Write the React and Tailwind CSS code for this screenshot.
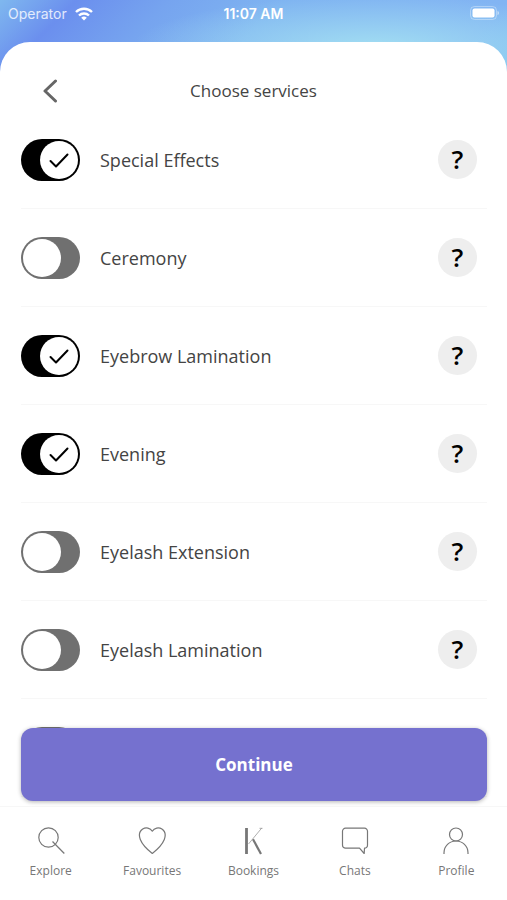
import React, { useState } from 'react';

const initialServices = [
  { name: 'Special Effects', enabled: true },
  { name: 'Ceremony', enabled: false },
  { name: 'Eyebrow Lamination', enabled: true },
  { name: 'Evening', enabled: true },
  { name: 'Eyelash Extension', enabled: false },
  { name: 'Eyelash Lamination', enabled: false },
  { name: 'Eyelash Tinting', enabled: false },
];

const SearchIcon = () => (
  <svg className="size-7" viewBox="0 0 28 28" fill="none" stroke="currentColor" strokeWidth="1.2">
    <circle cx="11.5" cy="10.5" r="9.7" />
    <path d="M15.500 14.500 27.300 26.500" />
  </svg>
);

const HeartIcon = () => (
  <svg className="size-7" viewBox="0 0 28 28" fill="none" stroke="currentColor" strokeWidth="1.2" strokeLinejoin="round">
    <path d="M14.300 4.200C12.300.8 7.800 0 4.700 2 1.500 4.200.8 8.500 2.300 12.500c1.800 4.500 6.500 9.700 12 14 5.500-4.300 10.200-9.500 12-14 1.500-4 .8-8.300-2.400-10.500C20.800 0 16.300.8 14.300 4.200Z" />
  </svg>
);

const BrandIcon = () => (
  <svg className="size-7" viewBox="0 0 28 28" fill="none" stroke="currentColor">
    <path d="M7.500 1v26" strokeWidth="2.800" />
    <path d="M9.500 17 22.500 1.300" strokeWidth="0.600" />
    <path d="M20.500 1.300h3" strokeWidth="0.600" />
    <path d="M14 12.300 22 27" strokeWidth="2.200" />
  </svg>
);

const ChatIcon = () => (
  <svg className="size-7" viewBox="0 0 28 28" fill="none" stroke="currentColor" strokeWidth="1.2" strokeLinejoin="round">
    <path d="M4.500 1.200h19a3 3 0 0 1 3 3v14a3 3 0 0 1-3 3l-.3 5.300-4.700-5.300h-14a3 3 0 0 1-3-3v-14a3 3 0 0 1 3-3Z" />
  </svg>
);

const ProfileIcon = () => (
  <svg className="size-7" viewBox="0 0 28 28" fill="none" stroke="currentColor" strokeWidth="1.2">
    <circle cx="14" cy="7.500" r="6.500" />
    <path d="M2 27v-1.300c0-6.500 5.400-11.700 12-11.700s12 5.200 12 11.700V27" />
  </svg>
);

const tabs = [
  { label: 'Explore', Icon: SearchIcon },
  { label: 'Favourites', Icon: HeartIcon },
  { label: 'Bookings', Icon: BrandIcon },
  { label: 'Chats', Icon: ChatIcon },
  { label: 'Profile', Icon: ProfileIcon },
];

const StatusBar = () => (
  <div className="grid h-[42px] shrink-0 grid-cols-3 items-start px-2 pt-1 font-['Inter',sans-serif] text-sm text-white">
    <div className="flex items-center gap-2">
      <span className="text-white/80">Operator</span>
      <svg className="h-[14px] w-[18px]" viewBox="0 0 18 14" fill="none" stroke="currentColor" strokeWidth="2.4">
        <path d="M1 5a11.500 11.500 0 0 1 16 0" />
        <path d="M4 8.500a7.200 7.200 0 0 1 10 0" />
        <path d="M9 13.600 6.200 10.800a4 4 0 0 1 5.600 0Z" fill="currentColor" stroke="none" />
      </svg>
    </div>
    <span className="text-center font-semibold">11:07 AM</span>
    <svg className="mt-[2px] h-[14px] w-[30px] justify-self-end" viewBox="0 0 30 14" fill="none">
      <rect x="1.500" y="0.500" width="26" height="13" rx="4" stroke="white" strokeOpacity="0.35" />
      <rect x="3.500" y="2.500" width="22" height="9" rx="2" fill="white" />
      <path d="M28.500 5v4c2-.8 2-3.200 0-4Z" fill="white" fillOpacity="0.5" />
    </svg>
  </div>
);

const ServiceRow = ({ service, onToggle }) => (
  <li className="flex h-[98px] items-center border-b border-[#f7f7f7] pr-[10px]">
    <label className="flex flex-1 items-center gap-5">
      <span className="relative h-[42px] w-[59px] shrink-0">
        <input
          type="checkbox"
          checked={service.enabled}
          onChange={onToggle}
          className="peer block size-full appearance-none rounded-full bg-[#707070] checked:bg-black"
        />
        <span className="pointer-events-none absolute top-[2px] left-[2px] flex size-[38px] items-center justify-center rounded-full bg-white peer-checked:left-[19px]">
          {service.enabled && (
            <svg className="h-4 w-5" viewBox="0 0 20 16" fill="none" stroke="black" strokeWidth="2" strokeLinecap="round" strokeLinejoin="round">
              <path d="M1.500 9 7 14.500 18.500 2.500" />
            </svg>
          )}
        </span>
      </span>
      <span className="text-lg text-[#444444]">{service.name}</span>
    </label>
    <button
      type="button"
      aria-label={`About ${service.name}`}
      className="flex size-[39px] items-center justify-center rounded-full bg-[#eeeeee] text-[26px] font-semibold text-black"
    >
      ?
    </button>
  </li>
);

const App = () => {
  const [services, setServices] = useState(initialServices);

  const toggle = (name) =>
    setServices(services.map((s) => (s.name === name ? { ...s, enabled: !s.enabled } : s)));

  return (
    <div className="flex h-screen flex-col bg-[radial-gradient(ellipse_48%_52px_at_74%_48px,#a2def2_0%,#a2def200_100%),linear-gradient(135deg,#7fb8ef_0px,#6b8fee_54px,#76a4ef_120px,#7fb4f1_200px,#82b4f3_360px,#80c4f0_420px)] font-['Open_Sans',sans-serif]">
      <StatusBar />
      <div className="flex min-h-0 flex-1 flex-col overflow-hidden rounded-t-[30px] bg-white">
        <header className="grid shrink-0 grid-cols-[40px_1fr_40px] items-center px-[30px] pt-[29px]">
          <button type="button" aria-label="Back" className="flex size-10 items-center justify-center">
            <svg className="h-6 w-4" viewBox="0 0 16 24" fill="none" stroke="#666666" strokeWidth="3" strokeLinecap="round" strokeLinejoin="round">
              <path d="M13.500 2 3 12l10.500 10" />
            </svg>
          </button>
          <h1 className="text-center text-[17px] text-[#444444]">Choose services</h1>
        </header>

        <main className="relative min-h-0 flex-1">
          <ul className="h-full overflow-hidden pr-5 pl-[21px]">
            {services.map((service) => (
              <ServiceRow key={service.name} service={service} onToggle={() => toggle(service.name)} />
            ))}
          </ul>
          <div className="absolute inset-x-0 bottom-0 pr-5 pb-[5px] pl-[21px]">
            <button
              type="button"
              className="h-[73px] w-full rounded-xl bg-[#7571cf] text-[17px] font-bold text-white shadow-[0_1px_4px_rgba(0,0,0,0.3)]"
            >
              Continue
            </button>
          </div>
        </main>

        <nav className="grid h-[94px] shrink-0 grid-cols-5 border-t border-[#f7f7f7] pt-5">
          {tabs.map(({ label, Icon }) => (
            <a key={label} href="#" className="flex flex-col items-center gap-2 text-[#777777]">
              <Icon />
              <span className="text-xs leading-4 font-medium">{label}</span>
            </a>
          ))}
        </nav>
      </div>
    </div>
  );
};

export default App;
